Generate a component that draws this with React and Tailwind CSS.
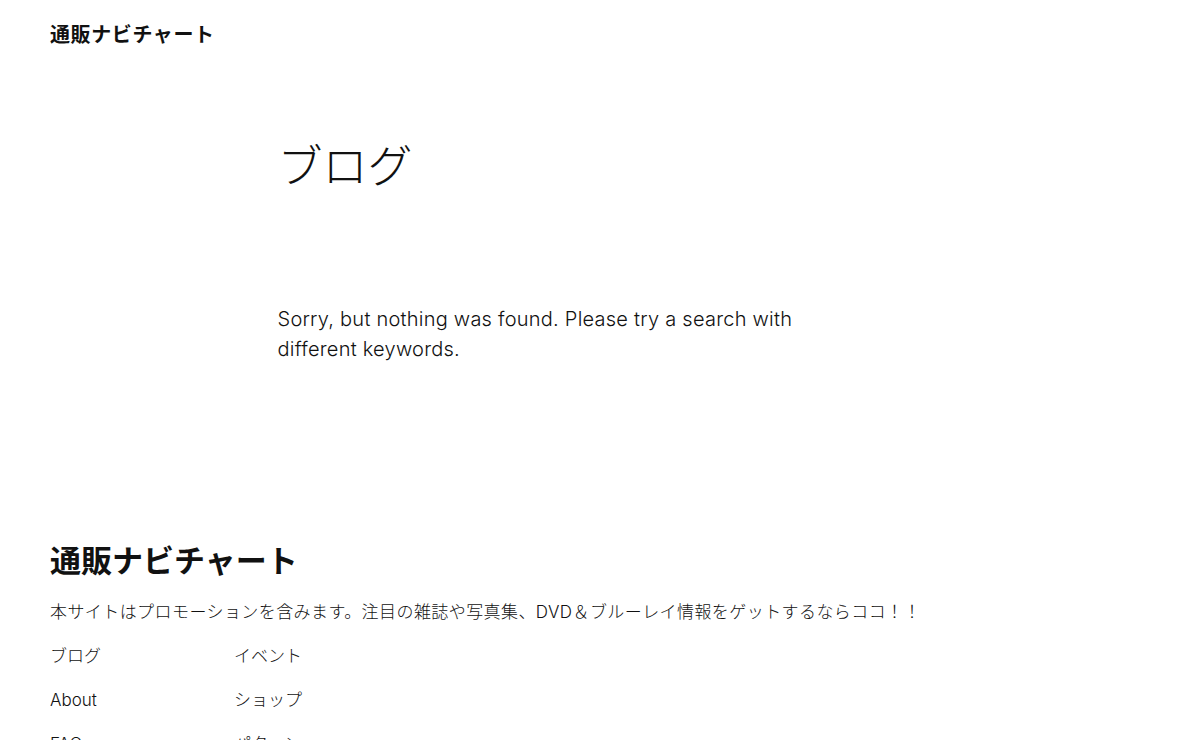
import React from 'react';

const font = { fontFamily: 'Inter, "Noto Sans CJK JP", sans-serif' };

const links = [
  ['ブログ', 'イベント'],
  ['About', 'ショップ'],
  ['FAQs', 'パターン'],
];

export default function App() {
  return (
    <div className="min-h-screen bg-white text-[#111111]" style={font}>
      {/* Header */}
      <header className="px-[50px] pt-[20px] pb-[20px]">
        <div className="text-[20px] font-semibold leading-[30px] tracking-[0.03em]">通販ナビチャート</div>
      </header>

      {/* Main */}
      <main className="px-[50px]">
        <div className="mx-auto w-[645px]">
          <h1 className="pt-[65px] text-[45px] font-light leading-[64px]">ブログ</h1>
          <p className="mt-[105px] max-w-[580px] text-[20px] leading-[30px] font-light tracking-[0.012em]">
            Sorry, but nothing was found. Please try a search with different keywords.
          </p>
        </div>
      </main>

      {/* Footer */}
      <footer className="px-[50px] pt-[174px]">
        <div className="text-[31px] font-semibold leading-[46px]">通販ナビチャート</div>
        <p className="mt-[16px] text-[17px] font-light leading-[24px] tracking-[0.025em]">
          本サイトはプロモーションを含みます。注目の雑誌や写真集、DVD＆ブルーレイ情報をゲットするならココ！！
        </p>
        <div className="mt-[20px] flex flex-col gap-[20px]">
          {links.map(([a, b]) => (
            <div key={a} className="flex text-[17px] font-light leading-[24px]">
              <span className="w-[184px]">{a}</span>
              <span>{b}</span>
            </div>
          ))}
        </div>
      </footer>
    </div>
  );
}
